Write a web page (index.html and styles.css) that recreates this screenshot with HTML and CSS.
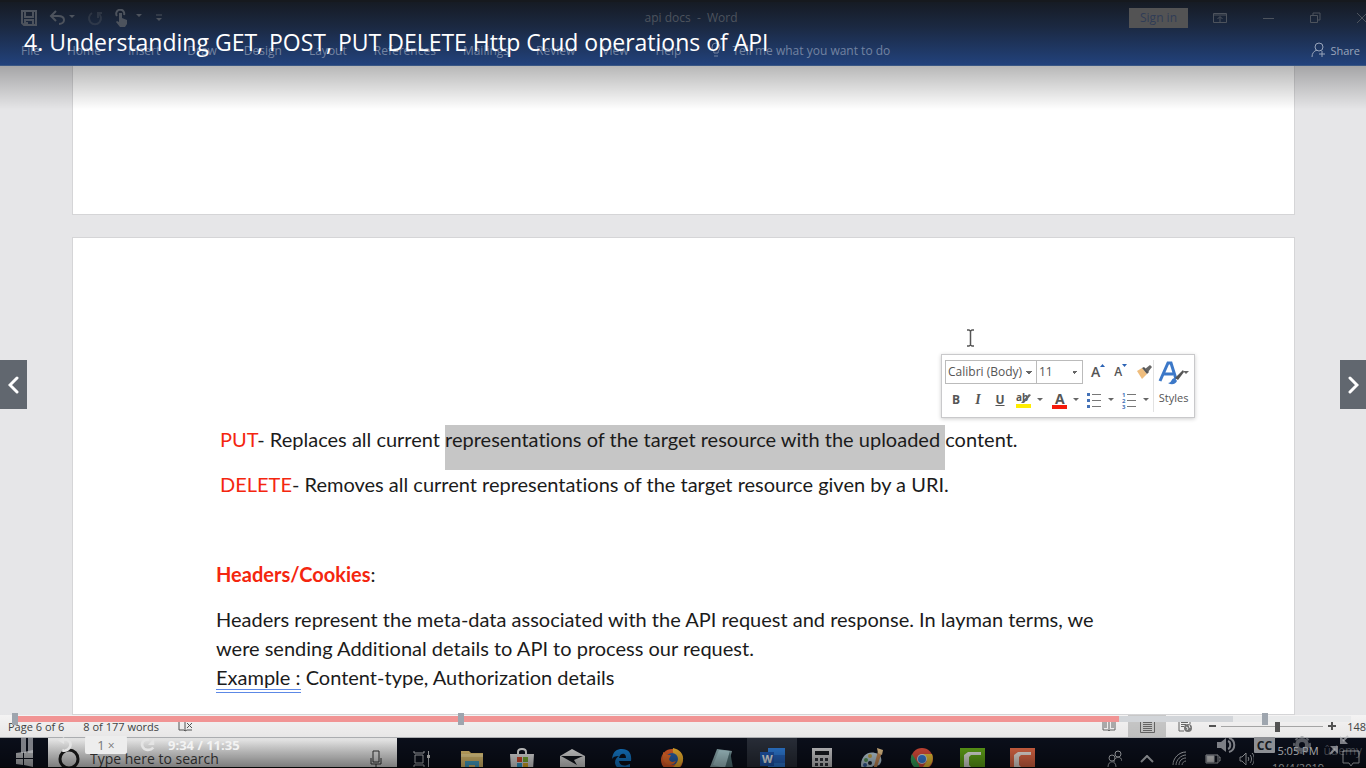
FILE: index.html
```html
<!DOCTYPE html>
<html lang="en">
<head>
<meta charset="utf-8">
<title>4. Understanding GET, POST, PUT DELETE Http Crud operations of API</title>
<link rel="stylesheet" href="styles.css">
</head>
<body>
<div class="player">
  <header class="ribbon">
    <div class="titlebar">
      <div class="quick">
        <button aria-label="Save"><svg width="16" height="16" viewBox="0 0 16 16"><path d="M1 1h14v14H3l-2-2zM4 1v6h8V1M4 15v-5h8v5M6 12v3" fill="none" stroke="currentColor" stroke-width="2"/></svg></button>
        <button aria-label="Undo"><svg width="26" height="16" viewBox="0 0 26 16"><path d="M7 1L2 6l5 5M2 6h7c4 0 6 2 6 4s-2 4-5 4" fill="none" stroke="currentColor" stroke-width="2"/><path d="M20 5h6l-3 3z" fill="currentColor"/></svg></button>
        <button class="dim" aria-label="Redo"><svg width="16" height="16" viewBox="0 0 16 16"><path d="M5 3a6 6 0 1 0 6 0M11 8V3h4" fill="none" stroke="currentColor" stroke-width="2"/></svg></button>
        <button aria-label="Touch mode"><svg width="28" height="18" viewBox="0 0 28 18"><path d="M2 7a4 4 0 1 1 7-1" fill="none" stroke="currentColor" stroke-width="2"/><path d="M4 4h3v5l5 2v4l-2 3H5l-4-5 1-1 2 1zM21 5h6l-3 3z" fill="currentColor"/></svg></button>
        <button aria-label="Customize"><svg width="8" height="8" viewBox="0 0 8 8"><path d="M1 1h6" stroke="currentColor"/><path d="M1 4h6L4 7z" fill="currentColor"/></svg></button>
      </div>
      <div class="doc-name">api docs&nbsp; -&nbsp; Word</div>
      <div class="window">
        <button class="signin">Sign in</button>
        <button aria-label="Ribbon options"><svg width="14" height="12" viewBox="0 0 14 12"><path d="M.5 1.500h13v9H.5zM.5 3h13M7 10V5M4.500 7L7 4.500 9.500 7" fill="none" stroke="currentColor"/></svg></button>
        <button aria-label="Minimize"><svg width="11" height="12" viewBox="0 0 11 12"><path d="M0 6.500h11" stroke="currentColor"/></svg></button>
        <button aria-label="Restore"><svg width="11" height="12" viewBox="0 0 11 12"><path d="M.5 3.500h7v7h-7zM3 3V1h7v7H8" fill="none" stroke="currentColor"/></svg></button>
        <button aria-label="Close"><svg width="11" height="12" viewBox="0 0 11 12"><path d="M0 1l10 10M10 1L0 11" stroke="currentColor"/></svg></button>
      </div>
    </div>
    <nav class="tabs">
      <a href="#">File</a><a href="#">Home</a><a href="#">Insert</a><a href="#">Draw</a><a href="#">Design</a><a href="#">Layout</a><a href="#">References</a><a href="#">Mailings</a><a href="#">Review</a><a href="#">View</a><a href="#">Help</a>
      <a href="#" class="tell"><svg width="10" height="16" viewBox="0 0 10 16"><path d="M3 11C3 8 1 8 1 5a4 4 0 0 1 8 0c0 3-2 3-2 6zM3 14h4" fill="none" stroke="currentColor"/></svg>Tell me what you want to do</a>
      <a href="#" class="share"><svg width="15" height="16" viewBox="0 0 15 16"><circle cx="8" cy="5" r="4" fill="none" stroke="currentColor"/><path d="M1 15c0-4 2-6 5-7M11 9v6M8 12h6" fill="none" stroke="currentColor"/></svg>Share</a>
    </nav>
  </header>

  <main class="workspace">
    <section class="page page-end"></section>
    <article class="page">
      <p class="method"><span class="red">PUT</span>- Replaces all current <span class="selected">representations of the target resource with the uploaded </span>content.</p>
      <p class="method last"><span class="red">DELETE</span>- Removes all current representations of the target resource given by a URI.</p>
      <h2><span class="red">Headers/Cookies</span><span class="colon">:</span></h2>
      <p>Headers represent the meta-data associated with the API request and response. In layman terms, we were sending Additional details to API to process our request.<br><span class="grammar">Example :</span> Content-type, Authorization details</p>

      <svg class="ibeam" width="9" height="18" viewBox="0 0 9 18"><path d="M1 1h2l1.500 1L6 1h2M4.500 2v14M1 17h2l1.500-1L6 17h2" fill="none" stroke="#555" stroke-width="1.500"/></svg>
      <div class="mini">
        <div class="mini-tools">
          <div class="mini-row">
            <div class="fields">
              <select class="font" aria-label="Font"><option>Calibri (Body)</option></select>
              <select class="size" aria-label="Font size"><option>11</option></select>
            </div>
            <button aria-label="Grow font" class="grow">A<svg width="5" height="3" viewBox="0 0 5 3"><path d="M0 3h5L2.500 0z" fill="#2b63b5"/></svg></button>
            <button aria-label="Shrink font" class="shrink">A<svg width="5" height="3" viewBox="0 0 5 3"><path d="M0 0h5L2.500 3z" fill="#2b63b5"/></svg></button>
            <button aria-label="Format painter"><svg width="17" height="16" viewBox="0 0 17 16"><path d="M1 7l5-3 5 6-5 5z" fill="#efbd7d"/><path d="M6 4l2-1 5 5-2 2z" fill="#555"/><path d="M9 5l5-4 2 2-4 5z" fill="#666"/></svg></button>
          </div>
          <div class="mini-row format">
            <button class="b">B</button><button class="i">I</button><button class="u">U</button>
            <button aria-label="Highlight"><svg width="28" height="18" viewBox="0 0 28 18"><text x="1" y="10" class="ab">ab</text><path d="M6 12l8-9 2 1-7 8z" fill="#666"/><path d="M1 13h15v4H1z" fill="#ffed00"/><path d="M22 7h6l-3 3z" fill="#666"/></svg></button>
            <button aria-label="Font color"><svg width="28" height="18" viewBox="0 0 28 18"><text x="4" y="13" class="fa">A</text><path d="M1 14h15v4H1z" fill="#f51b0c"/><path d="M22 7h6l-3 3z" fill="#666"/></svg></button>
            <button aria-label="Bullets"><svg width="27" height="18" viewBox="0 0 27 18"><path d="M0 2h3v3H0zM0 8h3v3H0zM0 14h3v3H0z" fill="#4472b8"/><path d="M5 3.500h9M5 9.500h9M5 15.500h9" stroke="#777"/><path d="M21 7h6l-3 3z" fill="#666"/></svg></button>
            <button aria-label="Numbering"><svg width="27" height="18" viewBox="0 0 27 18"><text x="0" y="6" class="num">1</text><text x="0" y="12" class="num">2</text><text x="0" y="18" class="num">3</text><path d="M5 3.500h9M5 9.500h9M5 15.500h9" stroke="#777"/><path d="M21 7h6l-3 3z" fill="#666"/></svg></button>
          </div>
        </div>
        <button class="styles"><svg width="31" height="26" viewBox="0 0 31 26"><path d="M2 21L10 3h3l5 16M6 14h9" fill="none" stroke="#3c78c8" stroke-width="3"/><path d="M10 23c4 0 3-5 7-5l2 3c-2 4-6 4-9 2z" fill="#3c78c8"/><path d="M17 18l8-8 1 2-6 8z" fill="#555"/><path d="M25 11h6l-3 3z" fill="#666"/></svg>Styles</button>
      </div>
    </article>
  </main>

  <footer class="status">
    <span>Page 6 of 6</span><span>8 of 177 words</span>
    <svg width="16" height="14" viewBox="0 0 16 14"><path d="M7 12L6 11H1V1h5l1 1zM7 2l2-1h4M7 12l2-1h5M9 4l5 5M14 4L9 9" fill="none" stroke="#555"/></svg>
    <div class="views">
      <button aria-label="Read mode"><svg width="14" height="14" viewBox="0 0 14 14"><path d="M7 12L6 11H1V1h5l1 1 1-1h5v10H8zM7 2v10M2 4h3M2 6h3M2 8h3M9 4h3M9 6h3M9 8h3" fill="none" stroke="#666"/></svg></button>
      <button class="on" aria-label="Print layout"><svg width="15" height="14" viewBox="0 0 15 14"><path d="M.5.5h14v13H.5zM3 3.500h9M3 5.500h9M3 7.500h9M3 9.500h9M3 11.500h9" fill="none" stroke="#666"/></svg></button>
      <button aria-label="Web layout"><svg width="15" height="14" viewBox="0 0 15 14"><path d="M12 5V1H1v11h5M3 3.500h7M3 5.500h5M3 7.500h3" fill="none" stroke="#666"/><circle cx="10" cy="9" r="4" fill="#777"/><path d="M8 8l2 1-1 2M11 6l1 3" stroke="#eee" fill="none"/></svg></button>
    </div>
    <div class="zoom"><button aria-label="Zoom out"><svg width="7" height="8" viewBox="0 0 7 8"><path d="M0 4h7" stroke="#555" stroke-width="2"/></svg></button><input type="range" aria-label="Zoom" min="0" max="100" value="56"><button aria-label="Zoom in"><svg width="8" height="8" viewBox="0 0 8 8"><path d="M0 4h8M4 0v8" stroke="#555" stroke-width="2"/></svg></button></div>
    <span class="percent">148</span>
  </footer>

  <div class="taskbar">
    <button class="start" aria-label="Start"><svg width="17" height="17" viewBox="0 0 17 17"><path d="M0 3l7-1v6H0zM8 2l9-2v8H8zM0 9h7v6l-7-1zM8 9h9v8l-9-2z" fill="#b4b6ba"/></svg></button>
    <label class="search"><svg width="22" height="22" viewBox="0 0 22 22"><circle cx="11" cy="11" r="9" fill="none" stroke="#1c1c1c" stroke-width="3"/></svg><input type="text" placeholder="Type here to search"><svg width="12" height="18" viewBox="0 0 12 18"><path d="M3 1h6v11H3zM1 8v6h10V8M6 14v3" fill="none" stroke="#333"/></svg></label>
    <div class="apps">
      <button aria-label="Task view"><svg width="18" height="18" viewBox="0 0 18 18"><path d="M1 1v2h10V1M1 17v-2h10v2M2 5h8v8H2zM15.500 1v16" fill="none" stroke="#b6b8bc"/><path d="M14 5h3v3h-3z" fill="#ccc"/></svg></button>
      <button aria-label="File Explorer"><svg width="24" height="22" viewBox="0 0 24 22"><path d="M1 3h8l2 2h12v17H1z" fill="#dfc070"/><path d="M1 6h22v3H1z" fill="#edd58e"/><path d="M5 22v-9h14v9h-4v-5H9v5z" fill="#46a6cd"/></svg></button>
      <button aria-label="Store"><svg width="24" height="22" viewBox="0 0 24 22"><path d="M8 6V4c0-4 8-4 8 0v2" fill="none" stroke="#ddd" stroke-width="2"/><path d="M0 6h24l-1 16H1z" fill="#dfdfdf"/><path d="M7 9h5v5H7z" fill="#d9492c"/><path d="M13 9h5v5h-5z" fill="#7bb032"/><path d="M7 15h5v5H7z" fill="#349fd0"/><path d="M13 15h5v5h-5z" fill="#e3b029"/></svg></button>
      <button aria-label="Mail"><svg width="25" height="20" viewBox="0 0 25 20"><path d="M0 7L12 0l13 7v13H0z" fill="#d8d8d8"/><path d="M1 7h22l-9 4 3 5z" fill="#10131b"/></svg></button>
      <button aria-label="Edge"><svg width="22" height="22" viewBox="0 0 22 22"><path d="M1 11C2 3 6 1 11 1c7 0 10 5 9 12H8c1 6 7 5 11 3v4c-6 3-14 2-15-5 0-4 2-6 4-7-4 0-6 1-7 3zM8 10h7c0-6-6-5-7 0" fill="#1478c8"/></svg></button>
      <button aria-label="Firefox"><svg width="24" height="24" viewBox="0 0 24 24"><circle cx="12" cy="13" r="11" fill="#e8602a"/><path d="M13 1c9 2 12 9 9 15-3 7-10 9-16 6 7 0 12-5 10-10-1-4-4-5-3-11z" fill="#f6b62f"/><circle cx="12" cy="12" r="6" fill="#2a60a8"/><path d="M3 5l4 3h4l-2 4c1 4 5 3 7 2-3 6-11 5-13-2z" fill="#f0702c"/></svg></button>
      <button aria-label="Notepad"><svg width="24" height="22" viewBox="0 0 24 22"><path d="M7 1l15 2-5 19-17-3z" fill="#8fadb2"/><path d="M9 2l11 1-5 17-12-3z" fill="#a9cbd0"/><path d="M15 20l5-17 3 17z" fill="#55777c"/></svg></button>
      <button class="open" aria-label="Word"><svg width="25" height="22" viewBox="0 0 25 22"><path d="M8 0h17v22H8z" fill="#2f7cd8"/><path d="M8 7h17v8H8z" fill="#2563bd"/><path d="M0 4h14v14H0z" fill="#2058b0"/><text x="2" y="15" class="w">W</text></svg></button>
      <button aria-label="Calculator"><svg width="20" height="22" viewBox="0 0 20 22"><path d="M0 0h20v22H0z" fill="#cacacc"/><path d="M3 3h14v4H3z" fill="#17191f"/><path d="M3 10h3v3H3zM8 10h3v3H8zM13 10h3v3h-3zM3 15h3v3H3zM8 15h3v3H8zM13 15h3v3h-3zM3 20h3v2H3zM8 20h3v2H8zM13 20h3v2h-3z" fill="#30323a"/></svg></button>
      <button aria-label="Paint"><svg width="24" height="22" viewBox="0 0 24 22"><path d="M1 17C1 8 8 3 15 5c6 1 8 7 5 11-2 3-4 0-7 2-2 2 0 4-3 4-5 1-9-1-9-5z" fill="#b9cedb"/><circle cx="6" cy="12" r="2" fill="#5c9a5b"/><circle cx="10" cy="8" r="2" fill="#c9a747"/><circle cx="5" cy="17" r="2" fill="#355e9d"/><circle cx="10" cy="15" r="2" fill="#19202b"/><path d="M13 22l5-19 4 1-6 18z" fill="#c78a55"/><path d="M17 0l6 2-1 5-4-2z" fill="#e4c28b"/></svg></button>
      <button aria-label="Chrome"><svg width="24" height="24" viewBox="0 0 24 24"><circle cx="12" cy="12" r="11" fill="#e04d3b"/><path d="M2 7l7 11 1 5A11 11 0 0 1 2 7z" fill="#35a45b"/><path d="M12 7h10c3 8-3 15-11 16l6-9z" fill="#efc436"/><circle cx="12" cy="12" r="5" fill="#ddd"/><circle cx="12" cy="12" r="4" fill="#387fdc"/></svg></button>
      <button aria-label="Camtasia"><svg width="25" height="22" viewBox="0 0 25 22"><path d="M0 0h25v22H0z" fill="#64a818"/><path d="M21 4v3H11l-2 2v8l2 2h10v3H8l-4-3V7l4-3z" fill="#e3e5de"/></svg></button>
      <button aria-label="Recorder"><svg width="25" height="22" viewBox="0 0 25 22"><path d="M0 0h25v22H0z" fill="#e46a47"/><path d="M21 4v3H11l-2 2v8l2 2h10v3H8l-4-3V7l4-3z" fill="#eee4de"/></svg></button>
    </div>
    <div class="tray">
      <svg width="15" height="17" viewBox="0 0 15 17"><circle cx="11" cy="4" r="3"/><path d="M7 12c0-6 8-6 8-1"/><circle cx="5" cy="8" r="3"/><path d="M1 17c0-7 8-7 8 0"/></svg>
      <svg width="14" height="8" viewBox="0 0 14 8"><path d="M1 7l6-6 6 6" stroke-width="2"/></svg>
      <svg width="15" height="15" viewBox="0 0 15 15"><path d="M1 14C1 7 7 1 14 1M4 14c0-5 5-10 10-10M7 14c0-4 3-7 7-7M10 14c0-2 2-4 4-4"/></svg>
      <svg width="16" height="10" viewBox="0 0 16 10"><path d="M1 1h12v8H1zM14 3h1v4h-1"/><path d="M2 2h7v6H2z" fill="#ccc"/></svg>
      <svg width="15" height="14" viewBox="0 0 15 14"><path d="M1 5h2l4-4v12L3 9H1zM9 5c1 1 1 3 0 4M11 3c2 2 2 6 0 8M13 1c3 3 3 9 0 12"/></svg>
      <div class="clock"><span>5:05 PM</span><span>10/4/2019</span></div>
      <svg width="18" height="18" viewBox="0 0 18 18"><path d="M1 1h16v12h-6l-2 3-2-3H1z"/></svg>
    </div>
  </div>

  <div class="shade-top"><h1>4. Understanding GET, POST, PUT DELETE Http Crud operations of API</h1></div>

  <button class="side prev" aria-label="Previous"><svg width="11" height="18" viewBox="0 0 11 18"><path d="M9 2L2 9l7 7" fill="none" stroke="#fff" stroke-width="3" stroke-linecap="round"/></svg></button>
  <button class="side next" aria-label="Next"><svg width="11" height="18" viewBox="0 0 11 18"><path d="M2 2l7 7-7 7" fill="none" stroke="#fff" stroke-width="3" stroke-linecap="round"/></svg></button>

  <div class="shade-bottom">
    <div class="seek">
      <input type="range" aria-label="Seek" min="0" max="695" value="574">
      <i class="mark m1"></i><i class="mark m2"></i><i class="mark m3"></i>
    </div>
    <div class="controls">
      <button aria-label="Pause"><svg width="12" height="16" viewBox="0 0 12 16"><path d="M0 0h5v16H0zM7 0h5v16H7z" fill="currentColor"/></svg></button>
      <button aria-label="Rewind" class="bright"><svg width="16" height="16" viewBox="0 0 18 18"><path d="M7 3c6-1 9 3 8 7s-5 6-9 5" fill="none" stroke="currentColor" stroke-width="3"/><path d="M1 4l7-4v8z" fill="currentColor"/></svg></button>
      <button class="rate">1<small>×</small></button>
      <button aria-label="Forward" class="bright"><svg width="16" height="16" viewBox="0 0 18 18"><path d="M10 3C4 2 1 7 3 11s8 5 12 1" fill="none" stroke="currentColor" stroke-width="3"/><path d="M16 1v8H9z" fill="currentColor"/></svg></button>
      <span class="time">9:34 / 11:35</span>
      <div class="right">
        <button aria-label="Volume"><svg width="19" height="16" viewBox="0 0 19 16"><path d="M0 5h4l5-4v14l-5-4H0z" fill="currentColor"/><path d="M11 4c3 1 3 7 0 8M12 1c7 2 7 12 0 14" fill="none" stroke="currentColor" stroke-width="2"/></svg></button>
        <button class="cc">CC</button>
        <button class="gear" aria-label="Settings"><svg width="18" height="18" viewBox="0 0 18 18"><circle cx="9" cy="9" r="5" fill="none" stroke="currentColor" stroke-width="4"/><circle cx="9" cy="9" r="8" fill="none" stroke="currentColor" stroke-width="2" stroke-dasharray="3 3"/></svg></button>
        <button aria-label="Exit full screen"><svg width="20" height="20" viewBox="0 0 20 20"><path d="M19 1l-5 5M1 19l5-5" stroke="currentColor" stroke-width="2"/><path d="M11 1v8h8zM1 11h8v8z" fill="currentColor"/></svg></button>
      </div>
    </div>
    <span class="brand">ûdemy</span>
  </div>
</div>
</body>
</html>
```
FILE: styles.css
```css
* { box-sizing: border-box; }
body { margin: 0; font-family: "Open Sans", "Noto Sans", sans-serif; font-size: 11px; }
button { padding: 0; border: 0; background: none; color: inherit; font: inherit; display: flex; align-items: center; justify-content: center; }
svg { flex: none; display: block; }
a { color: inherit; text-decoration: none; }
.player { position: relative; height: 100vh; overflow: hidden; display: flex; flex-direction: column; background: #e6e6e8; }

.ribbon { flex: none; height: 66px; background: linear-gradient(#161b24, #1b2942 40%, #22427c); border-top: 2px solid #16191e; border-bottom: 1px solid #3a5784; color: #4d535d; }
.titlebar { height: 31px; display: grid; grid-template-columns: 1fr auto 1fr; align-items: center; }
.quick { display: flex; align-items: center; gap: 12px; padding-left: 21px; }
.dim { opacity: .4; }
.doc-name { padding-left: 16px; font-size: 12px; }
.window { display: flex; align-items: center; justify-content: flex-end; gap: 36px; margin-right: -2px; }
.signin { width: 59px; height: 20px; margin-right: -11px; background: #535354; color: #303c56; font-size: 12px; }
.tabs { display: flex; align-items: center; gap: 27px; height: 34px; padding: 0 6px 0 21px; color: #7383a1; font-size: 12px; white-space: nowrap; }
.tell, .share { display: flex; align-items: center; gap: 11px; }
.tell { margin-left: 3px; }
.share { margin-left: auto; gap: 4px; color: #99a5bb; font-size: 11px; }

.workspace { flex: 1; min-height: 0; overflow: hidden; padding: 0 71px 0 72px; display: flex; flex-direction: column; gap: 22px; }
.page { position: relative; flex: 1 0 auto; background: #fff; border: 1px solid #d5d5d7; padding: 187px 164px 0 143px; color: #1b1b1b; font-family: Lato, "Open Sans", sans-serif; font-size: 20px; line-height: 29px; font-variant-ligatures: none; }
.page-end { flex: none; height: 149px; border-top: 0; padding: 0; }
.page p, .page h2 { margin: 0 0 16px; }
.page h2 { font-size: 20px; }
.colon { font-weight: 400; }
.page .method { margin: 0 0 0 4px; white-space: nowrap; }
.page .last { margin-bottom: 61px; }
.red { color: #f4260f; }
.selected { display: inline-block; padding-bottom: 16px; background: #c6c6c6; white-space: pre; }
.grammar { border-bottom: 4px double #5c88e6; }
.ibeam { position: absolute; left: 893px; top: 91px; }

.mini { position: absolute; right: 99px; top: 116px; width: 254px; height: 64px; padding: 5px 3px; display: flex; gap: 2px; background: #fff; border: 1px solid #c9c9cb; box-shadow: 0 1px 4px #0003; color: #555; font-family: "Open Sans", sans-serif; font-size: 11px; line-height: 16px; }
.mini-tools { flex: 1; border-right: 1px solid #e2e2e2; }
.mini-row { display: flex; align-items: center; gap: 9px; height: 24px; }
.fields { display: flex; margin-right: -1px; }
select { appearance: none; height: 24px; padding: 0 2px; border: 1px solid #bbb; border-radius: 0; color: #555; font: inherit; font-size: 12px; background: linear-gradient(45deg, transparent 50%, #666 50%) no-repeat right 7px center / 3px 3px, linear-gradient(315deg, transparent 50%, #666 50%) no-repeat right 4px center / 3px 3px, #fff; }
.font { width: 92px; }
.size { width: 47px; margin-left: -1px; }
.grow, .shrink { align-items: flex-start; font-weight: 600; font-size: 14px; }
.shrink { font-size: 12px; }
.format { height: 28px; padding: 3px 0 0 4px; font-weight: 700; font-size: 12px; gap: 8px; }
.b, .i, .u { width: 14px; }
.i { font-family: "Liberation Serif", serif; font-style: italic; font-size: 14px; }
.u { text-decoration: underline; }
.ab { font-size: 10px; font-weight: 700; fill: #555; }
.fa { font-size: 14px; font-weight: 700; fill: #555; }
.num { font-size: 6px; font-weight: 700; fill: #4472b8; }
.styles { flex-direction: column; width: 38px; gap: 4px; justify-content: flex-start; }

.status { flex: none; height: 23px; display: flex; align-items: center; gap: 19px; padding-left: 8px; overflow: hidden; background: #f5f4f4; border-bottom: 1px solid #b5b7ba; color: #444; white-space: nowrap; }
.views { display: flex; align-self: stretch; margin-left: auto; }
.views button { width: 38px; }
.views .on { background: #c9c9c9; }
.zoom { display: flex; align-items: center; gap: 5px; margin-left: -14px; }
.zoom input { appearance: none; width: 102px; height: 12px; margin: 0; background: linear-gradient(#aaa, #aaa) no-repeat center / 100% 1px; }
.zoom input::-webkit-slider-thumb { appearance: none; width: 5px; height: 12px; background: #555; }
.percent { margin-left: -8px; }

.taskbar { flex: none; height: 29px; overflow: hidden; display: flex; background: #0b0f1b; }
.start { width: 48px; height: 41px; }
.search { display: flex; align-items: center; gap: 10px; width: 349px; height: 41px; padding: 0 15px 0 10px; background: linear-gradient(#f0f0f0, #d0d0d0); }
.search input { flex: 1; min-width: 0; border: 0; padding: 0; background: none; font: inherit; font-size: 14px; }
.search input::placeholder { color: #3c3c3c; opacity: 1; }
.apps { display: flex; height: 41px; }
.apps button { width: 50px; }
.apps .open { background: #292e39; }
.w { font-size: 11px; font-weight: 700; fill: #eee; }
.tray { margin-left: auto; height: 41px; display: flex; align-items: center; gap: 18px; padding-right: 6px; fill: none; stroke: #b4b7bc; }
.clock { display: flex; flex-direction: column; align-items: center; width: 56px; margin: 0 -2px; line-height: 17px; color: #d4d6da; font-size: 11px; }
.player::after { content: ""; height: 1px; background: #080808; }

.shade-top { position: absolute; inset: 0 0 auto; height: 110px; background: linear-gradient(transparent 66px, #00000048 66px, transparent); pointer-events: none; }
.shade-top h1 { margin: 0; padding: 26px 24px 0; color: #fff; font-size: 23px; line-height: 32px; font-weight: 400; }
.side { position: absolute; top: 360px; height: 49px; width: 27px; background: #61676f; }
.prev { left: 0; }
.next { right: 0; width: 26px; }
.shade-bottom { position: absolute; inset: auto 0 0; height: 55px; background: linear-gradient(transparent, #00000010 50%, #00000070); }
.seek { position: relative; height: 6px; margin: 3px 15px 0; }
.seek input { appearance: none; display: block; width: 100%; height: 6px; margin: 0; background: linear-gradient(90deg, #f19494 82.6%, #d2d5d9 82.6% 91.2%, #e9eaeb 91.2%); }
.seek input::-webkit-slider-thumb { appearance: none; width: 1px; height: 6px; }
.mark { position: absolute; top: -3px; width: 6px; height: 12px; margin-left: -3px; background: #9ea5ae; }
.m1 { left: 0; }
.m2 { left: 33.4%; }
.m3 { left: 93.6%; }
.controls { display: flex; align-items: center; height: 20px; margin-top: 13px; padding: 0 17px 0 21px; color: #b7b9bdaa; }
.bright { margin-left: 24px; color: #e4e4e4; }
.rate { width: 42px; height: 18px; margin-left: 12px; gap: 3px; border-radius: 2px; background: #ededed; color: #777; font-size: 13px; }
.rate small { font-size: 12px; }
.rate + .bright { margin-left: 13px; }
.time { margin-left: 12px; color: #f3f3f3; font-size: 13px; font-weight: 700; }
.right { margin-left: auto; display: flex; align-items: center; gap: 18px; }
.gear { color: #8b8d9299; }
.cc { width: 21px; height: 16px; background: #8d8f94; color: #171a21; font-size: 12px; font-weight: 700; border-radius: 1px; }
.brand { position: absolute; right: 4px; bottom: 9px; color: #b7b9bd55; font-size: 12px; line-height: 16px; }
```
